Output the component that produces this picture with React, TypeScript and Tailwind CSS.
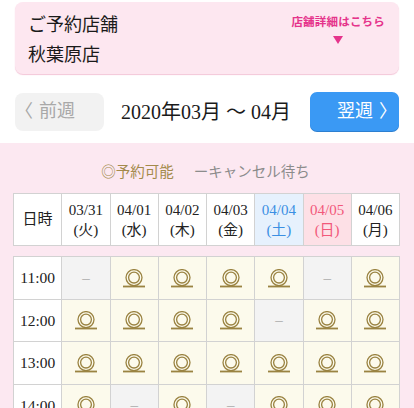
import React from "react";

const FONT = '"Liberation Serif", "Noto Sans CJK JP", serif';

function Maru() {
  return (
    <svg width="22" height="19" viewBox="0 0 22 19" className="block">
      <circle cx="11" cy="8.6" r="8" fill="none" stroke="#9a8342" strokeWidth="1.3" />
      <circle cx="11" cy="8.6" r="5.4" fill="none" stroke="#9a8342" strokeWidth="1.3" />
      <rect x="0" y="16.6" width="22" height="1.8" fill="#9a8342" />
    </svg>
  );
}

const days = [
  { d: "03/31", w: "(火)", t: "text-[#222]", bg: "bg-white" },
  { d: "04/01", w: "(水)", t: "text-[#222]", bg: "bg-white" },
  { d: "04/02", w: "(木)", t: "text-[#222]", bg: "bg-white" },
  { d: "04/03", w: "(金)", t: "text-[#222]", bg: "bg-white" },
  { d: "04/04", w: "(土)", t: "text-[#3b8fe3]", bg: "bg-[#e6f1fd]" },
  { d: "04/05", w: "(日)", t: "text-[#f2587a]", bg: "bg-[#fde0e6]" },
  { d: "04/06", w: "(月)", t: "text-[#222]", bg: "bg-white" },
];

const rows: { time: string; slots: boolean[] }[] = [
  { time: "11:00", slots: [false, true, true, true, true, false, true] },
  { time: "12:00", slots: [true, true, true, true, false, true, true] },
  { time: "13:00", slots: [true, true, true, true, true, true, true] },
  { time: "14:00", slots: [true, false, true, false, true, true, true] },
];

export default function App() {
  return (
    <div className="w-[414px] h-[408px] overflow-hidden bg-white" style={{ fontFamily: FONT }}>
      {/* Store card */}
      <div className="pt-[2px] px-[15px]">
        <div className="h-[72px] rounded-[8px] bg-[#fde7f0] shadow-[0_1px_1px_rgba(235,160,190,0.6)] flex justify-between pl-[13px] pr-[14px]">
          <div className="pt-[8px] text-[18px] leading-[30px] text-[#1a1a1a]">
            <div>ご予約店舗</div>
            <div>秋葉原店</div>
          </div>
          <div className="pt-[12px] flex flex-col items-center">
            <div className="text-[11.5px] leading-[16px] font-bold text-[#e5348b] tracking-[0.2px]">店舗詳細はこちら</div>
            <div className="mt-[6px] w-0 h-0 border-l-[5px] border-r-[5px] border-t-[8px] border-l-transparent border-r-transparent border-t-[#e5348b]" />
          </div>
        </div>
      </div>

      {/* Week nav */}
      <div className="mt-[18px] px-[15px] flex items-center">
        <div className="w-[89px] h-[38px] rounded-[8px] bg-[#f2f2f2] flex items-center pl-0 text-[18px] text-[#a8a8a8]">
          <span>〈</span>
          <span className="ml-[6px]">前週</span>
        </div>
        <div className="flex-1 text-center text-[20px] text-[#1a1a1a] pr-[2px]">2020年03月 〜 04月</div>
        <div className="w-[89px] h-[39px] rounded-[7px] bg-[#3a99f4] shadow-[0_1px_0_#2d7fd0] flex items-center justify-end pr-[2px] text-[18px] text-white">
          <span>翌週</span>
          <span className="ml-[6px]">〉</span>
        </div>
      </div>

      {/* Pink section */}
      <div className="mt-[12px] bg-[#fce8f1] pl-[13px] pr-[14px] pt-[20px] pb-[20px]">
        <div className="text-center text-[14.5px] leading-[18px] pr-[2px]">
          <span className="text-[#a38a4b]">◎予約可能</span>
          <span className="inline-block w-[20px]" />
          <span className="text-[#8c8c8c]">ーキャンセル待ち</span>
        </div>

        {/* Header grid */}
        <div className="mt-[12px] grid grid-cols-8 gap-px bg-[#d2d2d2] p-px">
          <div className="h-[51px] bg-white flex items-center justify-center text-[15px] text-[#222]">日時</div>
          {days.map((d) => (
            <div key={d.d} className={`h-[51px] ${d.bg} ${d.t} flex flex-col items-center justify-center text-[15px] leading-[20px]`}>
              <span>{d.d}</span>
              <span>{d.w}</span>
            </div>
          ))}
        </div>

        {/* Body grid */}
        <div className="mt-[10px] grid grid-cols-8 gap-px bg-[#d2d2d2] p-px">
          {rows.map((r) => (
            <React.Fragment key={r.time}>
              <div className="h-[41.5px] bg-white flex items-center justify-center text-[15.5px] text-[#222]">{r.time}</div>
              {r.slots.map((ok, i) =>
                ok ? (
                  <div key={i} className="h-[41.5px] bg-[#fcfaec] flex items-center justify-center pt-[1px]">
                    <Maru />
                  </div>
                ) : (
                  <div key={i} className="h-[41.5px] bg-[#f3f3f3] flex items-center justify-center text-[15px] text-[#aaaaaa]">–</div>
                )
              )}
            </React.Fragment>
          ))}
        </div>
      </div>
    </div>
  );
}
